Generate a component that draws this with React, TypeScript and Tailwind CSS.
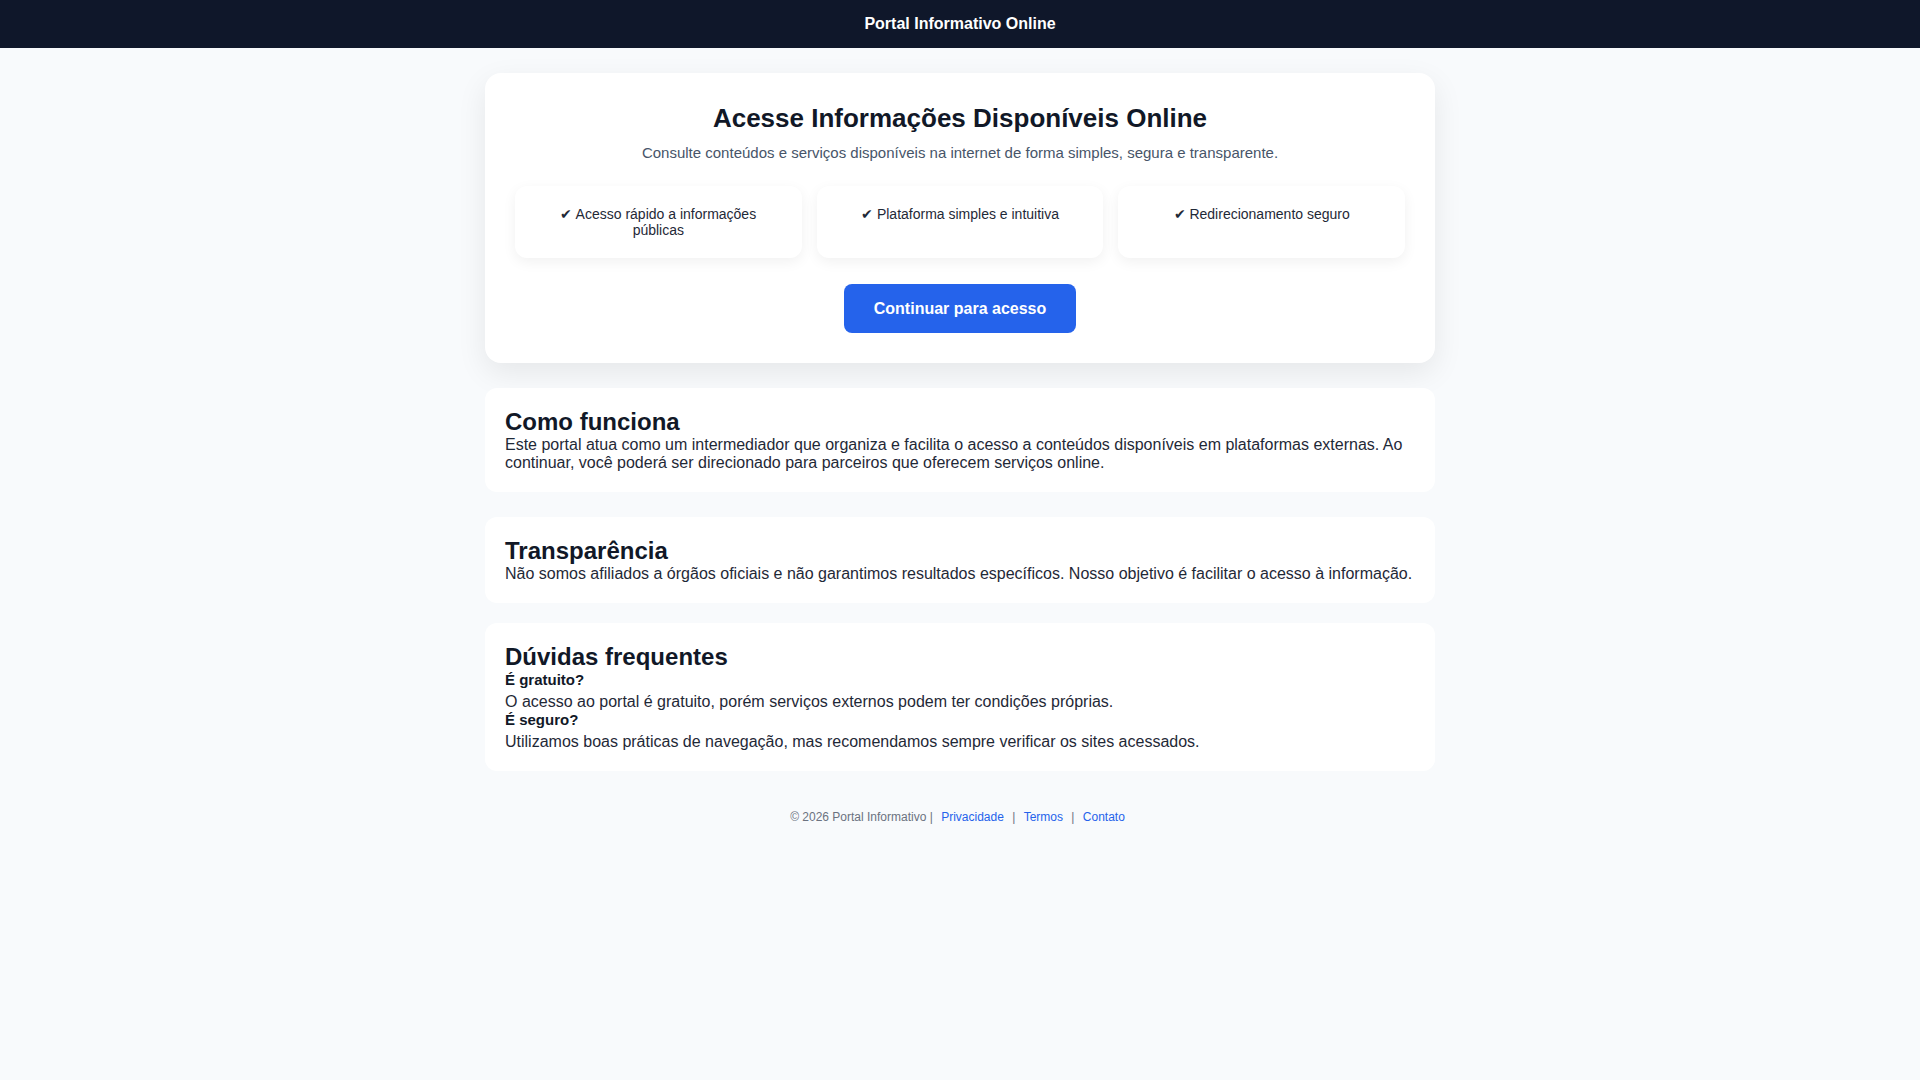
import React from 'react';

const features = [
  'Acesso rápido a informações públicas',
  'Plataforma simples e intuitiva',
  'Redirecionamento seguro',
];

const faqs = [
  {
    q: 'É gratuito?',
    a: 'O acesso ao portal é gratuito, porém serviços externos podem ter condições próprias.',
  },
  {
    q: 'É seguro?',
    a: 'Utilizamos boas práticas de navegação, mas recomendamos sempre verificar os sites acessados.',
  },
];

const App: React.FC = () => {
  return (
    <div className="min-h-screen bg-[#f8fafc] font-['Liberation_Sans',Arial,sans-serif] leading-[normal] text-[16px] text-[#1f2937]">
      {/* Header */}
      <header className="h-12 bg-[#0f172a] flex items-center justify-center">
        <span className="text-white font-bold text-[16px]">Portal Informativo Online</span>
      </header>

      <main className="mx-auto max-w-[950px] pt-[25px]">
        {/* Hero card */}
        <section className="bg-white rounded-2xl p-[30px] shadow-[0_10px_30px_rgba(0,0,0,0.08)] text-center">
          <h1 className="text-[26px] font-bold text-[#111827]">Acesse Informações Disponíveis Online</h1>
          <p className="mt-[10px] text-[15px] text-[#475569]">
            Consulte conteúdos e serviços disponíveis na internet de forma simples, segura e transparente.
          </p>

          <div className="mt-[25px] grid grid-cols-3 gap-[15px]">
            {features.map((f) => (
              <div
                key={f}
                className="bg-white rounded-xl p-5 text-[14px] text-[#1f2937] shadow-[0_4px_14px_rgba(0,0,0,0.06)]"
              >
                ✔ {f}
              </div>
            ))}
          </div>

          <button className="mt-[26px] h-[49px] px-[30px] rounded-lg bg-[#2563eb] text-white font-bold text-[16px]">
            Continuar para acesso
          </button>
        </section>

        {/* Como funciona */}
        <section className="mt-[25px] bg-white rounded-xl p-5">
          <h2 className="text-[24px] font-bold text-[#111827]">Como funciona</h2>
          <p>
            Este portal atua como um intermediador que organiza e facilita o acesso a conteúdos disponíveis em
            plataformas externas. Ao continuar, você poderá ser direcionado para parceiros que oferecem serviços
            online.
          </p>
        </section>

        {/* Transparência */}
        <section className="mt-[25px] bg-white rounded-xl p-5">
          <h2 className="text-[24px] font-bold text-[#111827]">Transparência</h2>
          <p>
            Não somos afiliados a órgãos oficiais e não garantimos resultados específicos. Nosso objetivo é facilitar
            o acesso à informação.
          </p>
        </section>

        {/* FAQ */}
        <section className="mt-[20px] bg-white rounded-xl p-5">
          <h2 className="text-[24px] font-bold text-[#111827]">Dúvidas frequentes</h2>
          {faqs.map((item) => (
            <div key={item.q}>
              <strong className="block text-[15px] font-bold text-[#111827]">{item.q}</strong>
              <p className="mt-[5px]">{item.a}</p>
            </div>
          ))}
        </section>

        {/* Footer */}
        <footer className="mt-[39px] text-center text-[12px] text-[#6b7280]">
          © 2026 Portal Informativo | <a href="#" className="mx-[5px] text-[#2563eb]">Privacidade</a> |{' '}
          <a href="#" className="mx-[5px] text-[#2563eb]">Termos</a> |{' '}
          <a href="#" className="mx-[5px] text-[#2563eb]">Contato</a>
        </footer>
      </main>
    </div>
  );
};

export default App;
